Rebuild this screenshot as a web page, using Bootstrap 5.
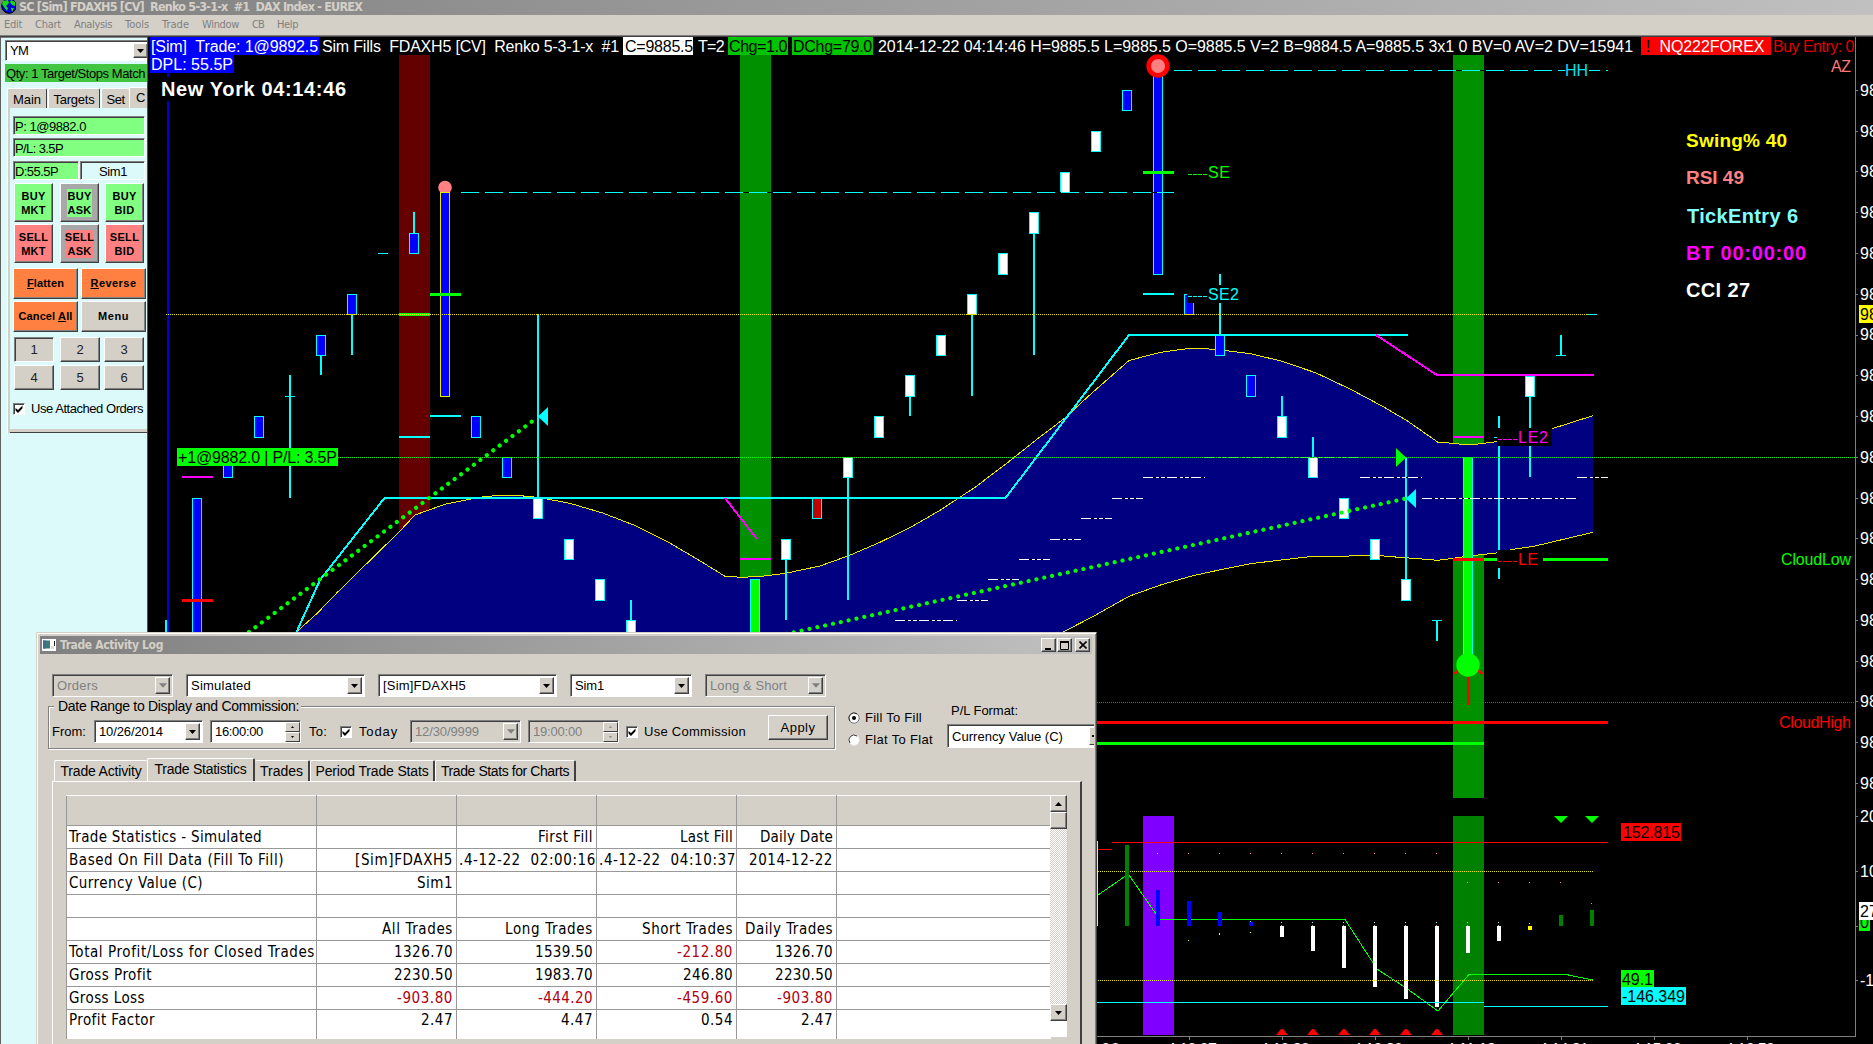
<!DOCTYPE html>
<html lang="en">
<head>
<meta charset="utf-8">
<title>SC [Sim] FDAXH5 [CV] Renko 5-3-1-x #1 DAX Index - EUREX</title>
<link href="https://cdn.jsdelivr.net/npm/bootstrap@5.3.0/dist/css/bootstrap.min.css" rel="stylesheet">
<style>
html,body{width:1873px;height:1044px;overflow:hidden;margin:0}
body{font-family:"Liberation Sans",Arial,sans-serif;font-size:13px;line-height:15px;color:#000;background:#000}
.app{width:1873px;height:1044px;overflow:hidden}
.tah{font-family:"DejaVu Sans Condensed","DejaVu Sans",sans-serif}
[data-w]{white-space:pre;display:inline-block;flex:none}
.title-strip{height:15px;background:linear-gradient(90deg,#808080,#c0c0c0);color:#d4d0c8}
.title-strip .cap{font-weight:bold;font-size:12.5px;line-height:13px;margin-left:3px}
.menu-strip{height:22px;background:#d4d0c8;border-bottom:1px solid #404040;box-shadow:inset 0 -1px #808080;color:#808080;font-size:11px;line-height:20px;padding-left:4px;gap:13px}
.side{width:148px;flex:none;background:#dcfafa;border-left:1px solid #606060;border-right:1px solid #505050;box-shadow:inset 0 1px #808080;overflow:hidden;padding:3px 0 0 4px}
.raised{border:1px solid;border-color:#fff #404040 #404040 #fff;box-shadow:inset -1px -1px #808080;background:#d4d0c8}
.sunk{border:1px solid;border-color:#808080 #fff #fff #808080;box-shadow:inset 1px 1px #404040;background:#fff}
.combo{height:23px;padding:2px 2px 2px 4px;overflow:hidden}
.combo .arrow{width:15px;flex:none;align-self:stretch}
.off{background:#d4d0c8;color:#808080}
.qty{height:18px;width:143px;background:#42c542;margin-top:3px;padding-left:1px;line-height:19px}
.side-tabs{height:21px;margin-top:5px}
.side-tabs .st{flex:none;height:20px;background:#d4d0c8;border:1px solid #fff;border-right:1px solid #404040;border-bottom:0;border-radius:2px 2px 0 0;text-align:center;line-height:22px;font-size:13px}
.side-page{border-left:1px solid #fff;margin-left:2px;height:325px;padding:8px 0 0 5px;box-shadow:inset 2px 0 #d4d0c8,inset 0 -1px #404040,inset 0 -4px #d4d0c8}
.fld{height:19px;background:#80ff80;padding-left:1px;line-height:19px;font-size:13px}
.tbtn{width:39px;height:39px;font-weight:bold;font-size:11px;line-height:14px;display:flex;align-items:center;justify-content:center;text-align:center;letter-spacing:.3px}
.wbtn{width:65px;height:31px;font-weight:bold;font-size:11px;display:flex;align-items:center;justify-content:center}
.nbtn{height:25px;width:40px;display:flex;align-items:center;justify-content:center;color:#222}
.g{background:#80ff80}.r{background:#ff8080}.o{background:#ff8040}.gy{background:#a8a8a8}
.chk{width:12px;height:12px;flex:none}
.chk svg{display:block}
.chart{background:#000;overflow:hidden}
.hdr{left:2px;top:0;height:18px;font-size:16px;line-height:19px;color:#fff;white-space:pre}
.hdr span{height:18px;flex:none}
.dpl{left:2px;top:18px;height:18px;font-size:16px;line-height:19px;background:#00f;color:#fff;padding:0 1px}
.log{left:36px;top:632px;width:1061px;height:430px;background:#d4d0c8;border:1px solid #d4d0c8;border-right:1px solid #404040;box-shadow:inset 1px 1px #fff,inset -1px 0 #808080;padding:3px 4px 0 3px;overflow:hidden}
.log-title{height:18px;background:linear-gradient(90deg,#808080,#c0c0c0);color:#d4d0c8;padding:0 2px}
.capbtn{width:15px;height:14px;display:flex;align-items:center;justify-content:center}
.combo-row{margin:20px 0 0 12px;gap:13px}
.grp{flex:none;margin:9px 0 0 8px;width:787px;height:43px;border:1px solid #808080;box-shadow:1px 1px #fff,inset 1px 1px #fff;padding:13px 0 0 3px}
.legend-txt{left:5px;top:-8px;background:#d4d0c8;padding:0 2px 0 4px;font-size:14px}
.spin{width:15px;flex:none}
.spin .raised{height:10px;display:flex;align-items:center;justify-content:center;box-shadow:none}
.tabs{height:23px;margin:9px 0 0 12px;padding-left:2px;font-size:14px}
.tabs .tb{height:21px;border:1px solid #fff;border-bottom:0;border-right:2px solid #404040;border-radius:2px 2px 0 0;text-align:center;line-height:21px}
.tabs .sel{height:23px;background:#d4d0c8;line-height:20px}
.page-box{margin-left:12px;width:1030px;height:300px;border:1px solid #fff;border-right:2px solid #404040;padding:13px 0 0 13px}
.stat{width:985px;table-layout:fixed;border-collapse:collapse;font-size:15px;line-height:20px;background:#fff;margin:0;flex:none}
.stat td{border:1px solid #989898;border-right:1px solid #989898;height:23px;padding:0 3px 1px 2px;text-align:right;white-space:pre;overflow:hidden}
.stat td:first-child{text-align:left}
.stat td:last-child{border-right:0}
.stat tr.hd td{height:30px;background:#d4d0c8;border-top:1px solid #fff}
.stat tr:last-child td{border-bottom:0;height:29px;vertical-align:top}
.neg{color:#b00010}
.sbar{width:17px;height:242px;background:#fff;flex:none}
.track{background:repeating-conic-gradient(#fff 0 25%,#d4d0c8 0 50%) 0 0/2px 2px}
.sb{width:17px;height:17px;display:flex;align-items:center;justify-content:center}
</style>
<script src="https://cdn.jsdelivr.net/npm/bootstrap@5.3.0/dist/js/bootstrap.bundle.min.js"></script>
</head>
<body>
<svg width="0" height="0" class="position-absolute"><defs>
<symbol id="dn" viewBox="0 0 7 4"><path d="M0 0H7L3.5 4Z" fill="currentColor"/></symbol>
<symbol id="ck" viewBox="0 0 8 8"><path d="M.5 3V5.5L3 8L7.5 3.2V.5L3 5Z" fill="#000"/></symbol>
</defs></svg>
<div class="app d-flex flex-column">
  <div class="title-strip d-flex align-items-start">
    <svg width="16" height="14" viewBox="0 0 16 14"><circle cx="9" cy="6" r="7.3" fill="#0000d8" stroke="#000"/><path d="M3 1L8 0L9 3L6 6L8 8L7 11L4 7L2 4ZM11 0L15 2L15 6L12 5L10 2ZM11 8L14 8L12 12Z" fill="#10e010"/></svg>
    <span class="cap tah" data-w="343">SC [Sim] FDAXH5 [CV]  Renko 5-3-1-x  #1  DAX Index - EUREX</span>
  </div>
  <nav class="menu-strip d-flex tah">
    <span data-w="18">Edit</span><span data-w="26">Chart</span><span data-w="38">Analysis</span><span data-w="24">Tools</span><span data-w="27">Trade</span><span data-w="37">Window</span><span data-w="12">CB</span><span data-w="21">Help</span>
  </nav>
  <div class="d-flex flex-grow-1 overflow-hidden">
    <aside class="side">
      <div class="combo sunk d-flex align-items-center" style="height:21px;width:146px"><span data-w="18">YM</span><span class="arrow raised ms-auto d-flex align-items-center justify-content-center"><svg width="7" height="4"><use href="#dn"/></svg></span></div>
      <div class="qty"><span data-w="139">Qty: 1 Target/Stops Match</span></div>
      <div class="side-tabs d-flex align-items-end">
        <span class="st" style="width:40px;margin-left:2px"><span data-w="28">Main</span></span>
        <span class="st" style="width:52px;margin-left:1px"><span data-w="41">Targets</span></span>
        <span class="st" style="width:28px;margin-left:1px;border-right:0"><span data-w="18">Set</span></span>
        <span class="st" style="width:30px;height:21px;text-align:left;padding-left:6px;line-height:19px">C</span>
      </div>
      <div class="side-page">
        <div class="fld sunk" style="width:132px"><span data-w="71">P: 1@9882.0</span></div>
        <div class="fld sunk" style="width:132px;margin-top:3px"><span data-w="48">P/L: 3.5P</span></div>
        <div class="d-flex" style="margin-top:4px;gap:1px"><div class="fld sunk" style="width:66px"><span data-w="43">D:55.5P</span></div><div class="fld sunk text-center" style="width:65px;background:#dcfafa"><span data-w="28">Sim1</span></div></div>
        <div class="d-flex" style="margin:3px 0 0 1px;gap:7px"><div class="tbtn raised g">BUY<br>MKT</div><div class="tbtn raised gy"><span class="g px-0">BUY<br>ASK</span></div><div class="tbtn raised g" style="margin-left:-1px">BUY<br>BID</div></div>
        <div class="d-flex" style="margin:2px 0 0 1px;gap:7px"><div class="tbtn raised r">SELL<br>MKT</div><div class="tbtn raised gy"><span class="r">SELL<br>ASK</span></div><div class="tbtn raised r" style="margin-left:-1px">SELL<br>BID</div></div>
        <div class="d-flex" style="margin-top:5px;gap:3px"><div class="wbtn raised o"><span data-w="37"><u>F</u>latten</span></div><div class="wbtn raised o"><span data-w="46"><u>R</u>everse</span></div></div>
        <div class="d-flex" style="margin-top:2px;gap:3px"><div class="wbtn raised o"><span data-w="54">Cancel <u>A</u>ll</span></div><div class="wbtn raised"><span data-w="31">Menu</span></div></div>
        <div class="d-flex" style="margin:5px 0 0 1px;gap:5px"><div class="nbtn sunk" style="background:#d4d0c8">1</div><div class="nbtn raised" style="margin-left:1px">2</div><div class="nbtn raised" style="margin-left:-1px">3</div></div>
        <div class="d-flex" style="margin:3px 0 0 1px;gap:5px"><div class="nbtn raised">4</div><div class="nbtn raised" style="margin-left:1px">5</div><div class="nbtn raised" style="margin-left:-1px">6</div></div>
        <div class="d-flex align-items-center" style="margin-top:11px;gap:6px"><span class="chk sunk d-flex align-items-center justify-content-center"><svg width="8" height="8"><use href="#ck"/></svg></span><span data-w="112">Use Attached Orders</span></div>
      </div>
    </aside>
    <main class="chart position-relative flex-grow-1">
      <svg id="plot" class="d-block" width="1725" height="1007" viewBox="148 37 1725 1007" font-family="Liberation Sans,Arial,sans-serif" font-size="16"></svg>
      <div class="hdr position-absolute d-flex">
        <span style="background:#00f;width:169px;padding-left:1px"><b class="fw-normal" data-w="167">[Sim]  Trade: 1@9892.5</b></span>
        <span style="width:304px;padding-left:3px"><b class="fw-normal" data-w="297">Sim Fills  FDAXH5 [CV]  Renko 5-3-1-x  #1</b></span>
        <span style="background:#fff;color:#000;width:70px;padding-left:2px"><b class="fw-normal" data-w="68">C=9885.5</b></span>
        <span style="width:35px;padding-left:5px"><b class="fw-normal" data-w="26">T=2</b></span>
        <span style="background:#00c400;color:#000;width:60px;margin-right:4px;padding-left:1px"><b class="fw-normal" data-w="58">Chg=1.0</b></span>
        <span style="background:#00c400;color:#000;width:81px;padding-left:1px"><b class="fw-normal" data-w="79">DChg=79.0</b></span>
        <span style="width:768px;padding-left:5px"><b class="fw-normal" data-w="755">2014-12-22 04:14:46 H=9885.5 L=9885.5 O=9885.5 V=2 B=9884.5 A=9885.5 3x1 0 BV=0 AV=2 DV=15941</b></span>
        <span style="background:#f00;width:130px;padding-left:5px"><b class="fw-normal" style="color:#000">!</b><b class="fw-normal" style="margin-left:9px" data-w="105">NQ222FOREX</b></span>
        <span style="color:#e00000;padding-left:2px"><b class="fw-normal" data-w="81">Buy Entry: 0</b></span>
      </div>
      <div class="dpl position-absolute"><span data-w="82">DPL: 55.5P</span></div>
    </main>
  </div>

  <section class="log position-absolute">
    <div class="log-title d-flex align-items-center">
      <svg width="14" height="12"><rect width="14" height="12" fill="#fff"/><rect x="1" y="1.5" width="7" height="8" fill="#3a7a78"/><rect x="1" y="1.5" width="3" height="8" fill="#48688c"/><rect x="9" y="7" width="3" height="3" fill="#ddd"/><rect x="12" y="2" width="1" height="5" fill="#222"/></svg>
      <b class="tah ms-1" style="font-size:12px" data-w="103">Trade Activity Log</b>
      <div class="ms-auto d-flex"><span class="capbtn raised"><svg width="9" height="9"><rect x="1" y="7" width="6" height="2"/></svg></span><span class="capbtn raised" style="margin-left:1px"><svg width="9" height="9"><path d="M.5 1H8.5V8.5H.5Z" fill="none" stroke="#000"/><path d="M0 1H9" stroke="#000" stroke-width="2"/></svg></span><span class="capbtn raised" style="margin-left:3px"><svg width="8" height="8"><path d="M.5 .5L7.5 7.5M7.5 .5L.5 7.5" stroke="#000" stroke-width="1.6"/></svg></span></div>
    </div>
    <div class="combo-row d-flex">
      <div class="combo sunk off d-flex align-items-center" style="width:121px"><span data-w="41">Orders</span><span class="arrow raised ms-auto d-flex align-items-center justify-content-center"><svg width="8" height="5"><use href="#dn"/></svg></span></div>
      <div class="combo sunk d-flex align-items-center" style="width:179px"><span data-w="60">Simulated</span><span class="arrow raised ms-auto d-flex align-items-center justify-content-center"><svg width="7" height="4"><use href="#dn"/></svg></span></div>
      <div class="combo sunk d-flex align-items-center" style="width:179px"><span data-w="83">[Sim]FDAXH5</span><span class="arrow raised ms-auto d-flex align-items-center justify-content-center"><svg width="7" height="4"><use href="#dn"/></svg></span></div>
      <div class="combo sunk d-flex align-items-center" style="width:122px"><span data-w="29">Sim1</span><span class="arrow raised ms-auto d-flex align-items-center justify-content-center"><svg width="7" height="4"><use href="#dn"/></svg></span></div>
      <div class="combo sunk off d-flex align-items-center" style="width:121px"><span data-w="77">Long &amp; Short</span><span class="arrow raised ms-auto d-flex align-items-center justify-content-center"><svg width="8" height="5"><use href="#dn"/></svg></span></div>
    </div>
    <div class="d-flex align-items-start">
      <div class="grp position-relative d-flex align-items-start">
        <span class="legend-txt position-absolute"><span data-w="241">Date Range to Display and Commission:</span></span>
        <div class="d-flex align-items-center" style="height:23px"><span data-w="34">From:</span>
        <div class="combo sunk d-flex align-items-center" style="width:109px;margin-left:8px"><span data-w="64">10/26/2014</span><span class="arrow raised ms-auto d-flex align-items-center justify-content-center"><svg width="7" height="4"><use href="#dn"/></svg></span></div>
        <div class="combo sunk d-flex align-items-center" style="width:91px;margin-left:7px;padding:1px 0 1px 4px"><span data-w="48">16:00:00</span><span class="spin ms-auto"><span class="raised"><svg width="3" height="2"><path d="M0 2H3L1.5 0Z"/></svg></span><span class="raised"><svg width="3" height="2"><path d="M0 0H3L1.5 2Z"/></svg></span></span></div>
        <span style="margin-left:8px" data-w="18">To:</span>
        <span class="chk sunk d-flex align-items-center justify-content-center" style="margin-left:13px"><svg width="8" height="8"><use href="#ck"/></svg></span><span style="margin-left:7px" data-w="39">Today</span>
        <div class="combo sunk off d-flex align-items-center" style="width:111px;margin-left:12px"><span data-w="64">12/30/9999</span><span class="arrow raised ms-auto d-flex align-items-center justify-content-center"><svg width="8" height="5"><use href="#dn"/></svg></span></div>
        <div class="combo sunk off d-flex align-items-center" style="width:91px;margin-left:7px;padding:1px 0 1px 4px"><span data-w="49">19:00:00</span><span class="spin ms-auto"><span class="raised"><svg width="3" height="2"><path d="M0 2H3L1.5 0Z" fill="#888"/></svg></span><span class="raised"><svg width="3" height="2"><path d="M0 0H3L1.5 2Z" fill="#888"/></svg></span></span></div>
        <span class="chk sunk d-flex align-items-center justify-content-center" style="margin-left:7px"><svg width="8" height="8"><use href="#ck"/></svg></span><span style="margin-left:6px" data-w="102">Use Commission</span></div>
        <div class="raised d-flex align-items-center justify-content-center" style="width:60px;height:25px;margin:-5px 0 0 22px"><span data-w="35">Apply</span></div>
      </div>
      <div class="d-flex flex-column" style="margin:13px 0 0 13px;gap:7px">
        <div class="d-flex align-items-center"><svg width="12" height="12"><circle cx="6" cy="6" r="5.2" fill="#fff" stroke="#777"/><path d="M2 9A5 5 0 0 1 9 2" fill="none" stroke="#333"/><circle cx="6" cy="6" r="2" /></svg><span style="margin-left:5px" data-w="57">Fill To Fill</span></div>
        <div class="d-flex align-items-center"><svg width="12" height="12"><circle cx="6" cy="6" r="5.2" fill="#fff" stroke="#eee"/><path d="M2 9A5 5 0 0 1 9 2" fill="none" stroke="#333"/></svg><span style="margin-left:5px" data-w="68">Flat To Flat</span></div>
      </div>
      <div class="d-flex flex-column align-items-start" style="margin:6px 0 0 14px;width:148px"><span style="margin-left:4px" data-w="67">P/L Format:</span>
        <div class="combo sunk d-flex align-items-center" style="margin-top:6px;height:24px;width:147px;padding-right:0;border-right:0"><span data-w="111">Currency Value (C)</span><span class="arrow raised ms-auto d-flex align-items-center" style="width:5px;border-right:0;box-shadow:none;padding-left:2px"><svg width="2" height="2"><rect width="2" height="2"/></svg></span></div></div>
    </div>
    <div class="tabs d-flex align-items-end">
      <span class="tb" style="width:93px;border-right:0"><span data-w="81">Trade Activity</span></span><span class="tb sel" style="width:108px"><span data-w="92">Trade Statistics</span></span><span class="tb" style="width:55px;border-left:0"><span data-w="43">Trades</span></span><span class="tb" style="width:125px"><span data-w="113">Period Trade Stats</span></span><span class="tb" style="width:141px"><span data-w="128">Trade Stats for Charts</span></span>
    </div>
    <div class="page-box d-flex align-items-start">
      <table class="stat tah"><colgroup><col style="width:250px"><col style="width:140px"><col style="width:140px"><col style="width:140px"><col style="width:100px"><col></colgroup><tbody id="rows"></tbody></table>
      <div class="sbar d-flex flex-column" style="margin-left:-1px">
        <span class="sb raised"><svg width="7" height="4"><path d="M0 4H7L3.5 0Z"/></svg></span><span class="sb raised"></span><span class="track flex-grow-1"></span><span class="sb raised" style="margin-bottom:16px"><svg width="7" height="4"><use href="#dn"/></svg></span>
      </div>
    </div>
  </section>
</div>
<script>
// statistics table: [text, width] per cell
const R=[[],[['Trade Statistics - Simulated',193],0,['First Fill',55],['Last Fill',53],['Daily Date',73]],
[['Based On Fill Data (Fill To Fill)',215],['[Sim]FDAXH5',98],['.4-12-22  02:00:16',137],['.4-12-22  04:10:37',137],['2014-12-22',84]],
[['Currency Value (C)',134],['Sim1',36]],[],
[0,['All Trades',71],['Long Trades',88],['Short Trades',91],['Daily Trades',88]],
[['Total Profit/Loss for Closed Trades',246],['1326.70',59],['1539.50',58],['-212.80',56],['1326.70',58]],
[['Gross Profit',83],['2230.50',59],['1983.70',58],['246.80',50],['2230.50',58]],
[['Gross Loss',76],['-903.80',56],['-444.20',55],['-459.60',56],['-903.80',56]],
[['Profit Factor',86],['2.47',32],['4.47',32],['0.54',32],['2.47',32]]];
document.getElementById('rows').innerHTML=R.map((r,i)=>'<tr'+(i?'':' class="hd"')+'>'+[0,1,2,3,4,5].map(c=>'<td>'+(r[c]?`<span data-w="${r[c][1]}"${c&&i>5&&r[c][0][0]=='-'?' class="neg"':''}>${r[c][0]}</span>`:'')+'</td>').join('')+'</tr>').join('');
// spread letters so each caption takes its set width
document.querySelectorAll('[data-w]').forEach(e=>{const w=+e.dataset.w,n=e.textContent.length;const m=e.getBoundingClientRect().width;e.style.letterSpacing=((w-m)/n).toFixed(3)+'px'});

let s='';
const C='#0ff';
const rect=(x,y,w,h,f)=>s+=`<rect x="${x}" y="${y}" width="${w}" height="${h}" fill="${f}" shape-rendering="crispEdges"/>`;
const poly=(p,st,w=1,x='')=>s+=`<polyline points="${p}" fill="none" stroke="${st}" stroke-width="${w}" ${x}/>`;
const hl=(x1,x2,y,st,h=1,d='')=>s+=`<line x1="${x1}" x2="${x2}" y1="${y+h/2}" y2="${y+h/2}" stroke="${st}" stroke-width="${h}" shape-rendering="crispEdges"${d?` stroke-dasharray="${d}"`:''}/>`;
const tx=(x,y,t,f,len,x2='')=>s+=`<text x="${x}" y="${y}" fill="${f}" ${len?`textLength="${len}"`:''} ${x2}>${t}</text>`;
const body=(c,y1,y2,f,b=C)=>{rect(c-5,y1,10,y2-y1,b);rect(c-4,y1+1,8,y2-y1-2,f)};
const wick=(c,y1,y2)=>rect(c-1,y1,2,y2-y1,C);
// background bands
rect(399,55,31,500,'#640000');rect(740,55,31,530,'#009000');rect(1453,55,31,743,'#009000');
rect(1143,816,31,219,'#8000ff');rect(1453,816,31,219,'#008000');
// cloud
const up='296.5,632 317.5,613 336.7,593 399,532 415,515 445.7,504 470.6,499 485,496.5 501,495.4 516,495.4 532,496.7 547,499 570,503.3 602.6,513 633,524.7 665.8,540.7 696.4,558.7 725,576.3 741.5,577.3 760,576.5 785.5,573.3 820,566 848,556 879,542.7 910,527.7 940.5,510 975,487.3 1005.5,464.3 1036,440 1064,418.7 1091.6,393.3 1129,360.5 1160.5,352.3 1187,348.7 1205.7,348.7 1223.7,350.3 1250.5,353.7 1281,361 1315.5,372.7 1330,379.5 1351,389.5 1382,406 1407,420.7 1438,442.3 1453,443.3 1463,444.4 1475,444.4 1496,441.7 1552,428.7 1593,415.7';
const lo='1063,632 1091.6,617.3 1129,596.3 1160.5,585 1193,575.7 1223.7,569 1250.5,563.7 1281,560 1312,556.4 1330,556.2 1380,555.7 1399,557.3 1413,558.3 1438,560.3 1453,558.3 1475,555.3 1496,553 1513.5,549.3 1534,546.3 1593,532.3';
s+=`<polygon points="${up} ${lo.split(' ').reverse().join(' ')}" fill="#000080"/>`;
poly(up,'#e8e800',1,'shape-rendering="crispEdges"');poly(lo,'#e8e800',1,'shape-rendering="crispEdges"');
// session line
rect(167,73,2,4,'#0000c8');rect(167,101,2,531,'#0000c8');rect(165,620,2,12,C);
// candles
const B='#00f',W='#fff';
body(197,498,640,B);body(228,457,478,B);body(259,416,438,B);wick(290,375,498);hl(285,295,396,C);
body(321,335,356,B);wick(321,356,375);body(352,294,315,B);wick(352,315,355);hl(378,388,253,C);
wick(414,212,233);body(414,233,254,B);
s+='<circle cx="445" cy="187.5" r="6.8" fill="#ff8080"/>';body(445,192,397,B,'#e8e800');
body(476,416,438,B);body(507,457,478,B);body(569,539,560,W);body(600,579,601,W);wick(631,600,620);body(631,620,640,W);
body(755,579,640,'#0f0');body(786,539,560,W);wick(786,560,620);body(879,416,438,W);body(910,375,397,W);wick(910,397,416);
body(941,335,356,W);body(972,294,315,W);wick(972,315,396);body(1003,253,275,W);body(1034,212,234,W);wick(1034,234,355);
body(1065,172,193,W);body(1096,131,152,W);body(1127,90,111,B);body(1158,70,275,B);
body(1189,294,315,B);wick(1220,274,335);body(1251,375,397,B);wick(1282,396,416);body(1282,416,438,W);
wick(1313,437,457);body(1344,498,519,W);body(1375,539,560,W);wick(1406,457,579);body(1406,579,601,W);
hl(1432,1442,620,C);wick(1437,620,641);body(1468,457,660,'#0f0');rect(1464,457,8,1,'#0f0');
wick(1499,416,579);hl(1494,1499,437,C);wick(1530,396,477);wick(1561,335,355);hl(1556,1566,355,C);hl(1586,1597,314,C);
// trend lines
poly('296.5,632 320,580 384.5,498 1005.5,498 1129,335 1408,335',C,2,'shape-rendering="crispEdges"');
wick(538,314,498);body(538,498,519,W);wick(848,478,600);body(848,457,478,W);body(817,498,519,'#c00000');rect(812,497,10,2,C);
body(1220,335,356,B);body(1530,376,397,W);body(1313,457,478,W);
poly('725,498 757,539',"#f0f",2,'shape-rendering="crispEdges"');poly('1376,335 1437,375 1594,375','#f0f',2,'shape-rendering="crispEdges"');
// level marks
hl(182,213,476,'#f0f',2);hl(182,213,599,'#f00',3);hl(399,430,313,'#0f0',3);hl(399,430,436,C,2);
hl(430,461,293,'#0f0',3);hl(430,461,415,C,2);hl(740,771,558,'#f0f',2);hl(1143,1174,171,'#0f0',3);hl(1143,1174,293,C,2);
hl(1453,1484,436,'#f0f',2);hl(1484,1608,558,'#0f0',3);hl(1453,1484,558,'#f00',3);
// dashed extensions
[[461,1174,192],[1174,1608,70]].forEach(([a,b,y])=>{hl(a,b,y,'#000');hl(a,b,y,C,1,'18 6')});
// dash-dot-dot steps
[[895,957,620],[957,988,600],[988,1019,579],[1019,1050,559],[1050,1081,539],[1081,1112,518],[1112,1143,498],[1143,1205,477],[1205,1360,457],[1360,1422,477],[1422,1577,498],[1577,1608,477]].forEach(([a,b,y])=>{hl(a,b,y,'#000');hl(a,b,y,W,1,'10 3 3 2 4 2')});
// price lines
hl(166,1587,314,'#e8e800',1,'1 1');hl(338,1855,457,'#0f0',1,'1 1');hl(1097,1855,702,'#e000e0',1,'1 1');
// trade paths
poly('249,632 538,417','#0f0',4.2,'stroke-dasharray="0.01 8" stroke-linecap="round"');
poly('786,634 1406,498.5','#0f0',4.2,'stroke-dasharray="0.01 8" stroke-linecap="round"');
s+=`<path d="M538 416.5L548 407V426ZM1406 498.5L1416 489V508Z" fill="${C}"/><path d="M1396 448L1406 457.5L1396 467Z" fill="#0f0"/>`;
s+='<circle cx="1158" cy="66" r="11.7" fill="#f00"/><circle cx="1158" cy="66" r="7" fill="#ff8080"/>';
poly('1454.5,674 1468,661 1482.5,674','#f00',2.5);rect(1467,676,3,29,'#f00');s+='<circle cx="1468" cy="665" r="11.7" fill="#0f0"/>';
// tags
rect(1187,285,53,18,'#000');rect(1497,428,55,18,'#000');rect(1497,550,46,18,'#000');rect(1565,62,24,18,'#000');
hl(1188,1208,174,'#0f0',1,'4 1');tx(1208,178,'SE','#0f0',22);hl(1188,1208,296,C,1,'4 1');tx(1208,300,'SE2',C,31);
hl(1498,1518,439,'#f0f',1,'4 1');tx(1518,443,'LE2','#f0f',30);hl(1498,1518,561,'#f00',1,'4 1');tx(1518,565,'LE','#f00',20);
tx(1565,76,'HH','#00e0f0',23);
rect(177,448,161,18,'#0f0');tx(178,463,'+1@9882.0 | P/L: 3.5P','#000',159);
rect(157,77,192,24,'#000');
const bd='font-weight="bold" font-size=';
tx(161,96,'New York 04:14:46','#fff',185,bd+'"20"');
tx(1686,147,'Swing% 40','#ff0',101,bd+'"19"');tx(1686,183.5,'RSI 49','#ff8080',58,bd+'"19"');tx(1687,222.5,'TickEntry 6','#80ffff',111,bd+'"20"');tx(1686,260,'BT 00:00:00','#f0f',120,bd+'"20"');tx(1686,296.5,'CCI 27','#fff',64,bd+'"20"');
tx(1831,72,'AZ','#ff7878',20);tx(1781,565,'CloudLow','#0f0',70);tx(1779,728,'CloudHigh','#f00',72);
// support lines
hl(1097,1608,721,'#f00',3);hl(1097,1484,742,'#0f0',3);
// oscillator
hl(1112,1608,842,'#f00');hl(1097,1112,849,'#f00');hl(1098,1593,871,'#e8e800',1,'1 1');
poly('1098,895 1127,875 1129,875 1156,914 1160,919.5 1345,919.5 1377,969 1406,988 1438,1011 1469,974.5 1566,974.5 1593,980','#0f0',1,'shape-rendering="crispEdges"');
hl(1097,1484,1002,C);hl(1484,1608,1006,C);
rect(1097,841,1,85,'#ff0');
[[1127,845,926,'#008000'],[1158,890,926,B],[1189,901,926,B],[1220,912,926,B],[1251,922,926,B],[1282,926,937,W],[1313,926,951,W],[1344,926,968,W],[1375,926,987,W],[1406,926,999,W],[1437,926,1007,W],[1468,926,953,W],[1499,926,941,W],[1530,926,930,'#ff0'],[1561,915,926,'#008000'],[1592,910,926,'#008000']].forEach(([c,a,b,f])=>rect(c-2,a,4,b-a,f));
hl(1098,1593,980,'#e8e800',1,'1 1');hl(1435,1439,1002,C);
for(let i=0;i<10;i++)rect(1157+31*i,853,1,1,'#ff80a0');
for(let i=0;i<4;i++)rect(1467+31*i,882,1,1,'#ff80a0');
rect(1591,903,1,1,'#ff80a0');rect(1188,940,1,1,'#ff0');rect(1219,933,1,2,'#ff0');rect(1250,932,1,1,'#ff0');rect(1250,921,1,1,C);
for(let i=0;i<8;i++){rect(1281+31*i,922,1,1,'#80ffff');rect(1281+31*i,925,1,1,'#aa8')}
rect(1529,923,1,1,'#ff0');
for(let i=0;i<6;i++){const c=1282+31*i;s+=`<path d="M${c-6} 1035L${c-1} 1029H${c+1}L${c+6} 1035Z" fill="#f00"/>`}
[1561,1592].forEach(c=>s+=`<path d="M${c-7} 816H${c+7}L${c} 823Z" fill="#0f0"/>`);
rect(1621,823,60,18,'#f00');tx(1623,838,'152.815','#000',57);
rect(1621,970,33,17,'#0f0');tx(1622,985,'49.1','#000',31);
rect(1621,987,65,18,C);tx(1622,1002,'-146.349','#000',63);
// axes
hl(1097,1856,1036,'#808080');rect(1855,37,1,1000,'#808080');
['4:10:07','4:10:20','4:10:30','4:11:13','4:14:21','4:15:00','4:16:50'].forEach((t,i)=>{const x=1189+93*i;rect(x,1037,1,3,'#808080');tx(x+3,1054.6,t,'#fff',50,'text-anchor="middle"')});
tx(1096,1054.6,':00','#fff',24);
for(let i=0;i<18;i++){const y=90.3+40.77*i;if(y>790)break;rect(1856,Math.round(y-.4),2,1,'#808080');tx(1860,Math.round(y+5.5),(9891-i).toFixed(1),'#fff')}
[[816,'200'],[871,'100'],[980,'-100']].forEach(([y,t])=>{rect(1856,y,2,1,'#808080');tx(1860,y+6,t,'#fff')});
rect(1856,926,2,1,'#808080');
rect(1859,305,14,18,'#ff0');tx(1860,320,'9885.5','#000');
rect(1859,913,11,18,'#0f0');tx(1860,928,'0','#000',0);
rect(1859,902,14,18,'#fff');tx(1860,917,'27','#000');
document.getElementById('plot').innerHTML=s;
</script>
</body>
</html>
